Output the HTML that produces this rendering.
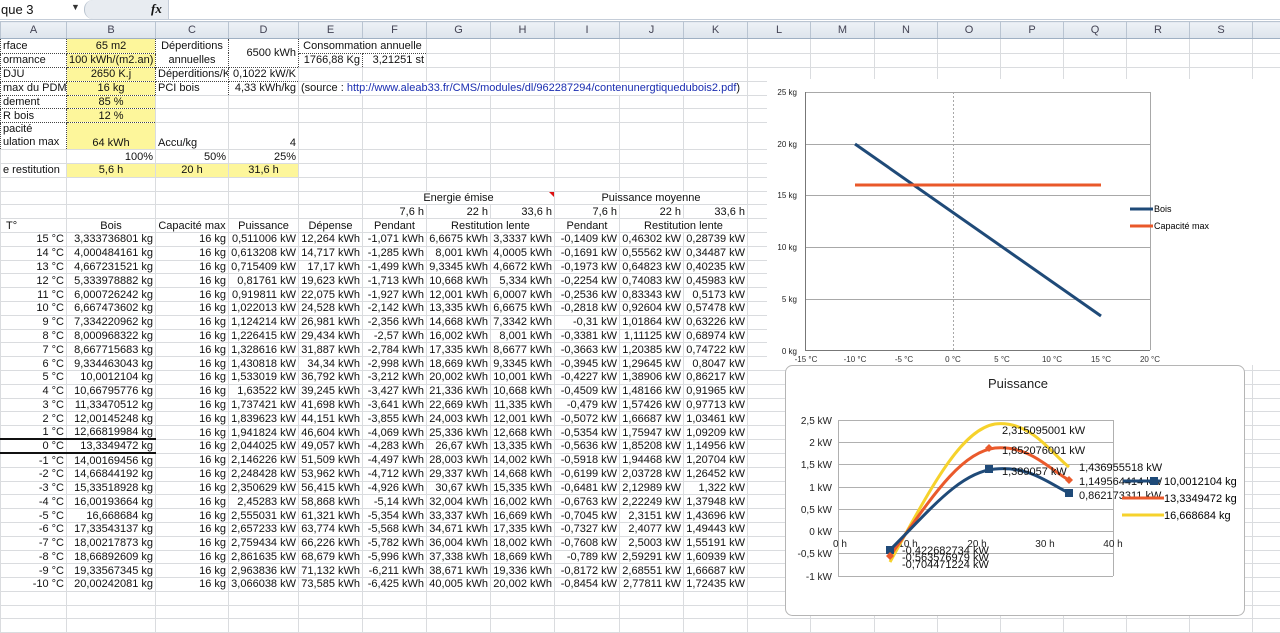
<!DOCTYPE html>
<html><head><meta charset="utf-8">
<style>
*{margin:0;padding:0;box-sizing:border-box}
body{width:1280px;height:625px;overflow:hidden;background:#fff;font-family:"Liberation Sans",Arial,sans-serif;font-size:11px;color:#111;position:relative}
#fb{position:absolute;left:0;top:0;width:1280px;height:20px;background:#fff;border-bottom:1px solid #c5cdd8}
#fb .nb{position:absolute;left:0;top:0;width:84px;height:19px;font-size:13px;line-height:19px;padding-left:1px}
#fb .ar{position:absolute;left:71px;top:2px;font-size:9px;color:#333}
#fb .gr{position:absolute;left:84px;top:0;width:84px;height:19px;background:#e8ecf1;border-radius:9px 0 0 9px;border-left:1px solid #b8c2ce}
#fb .fx{position:absolute;left:151px;top:1px;font-family:"Liberation Serif",serif;font-style:italic;font-weight:bold;font-size:13px}
#fb .in{position:absolute;left:168px;top:0;right:0;height:19px;border-left:1px solid #c5cdd8}
table{position:absolute;left:0;top:21px;border-collapse:collapse;table-layout:fixed;width:1280px}
td{border:1px solid #dadcdf;white-space:nowrap;overflow:hidden;text-align:right;padding:0 2px;height:13.8px;line-height:12px;font-size:11px}
tr.h td{background:linear-gradient(#edf1f6,#dde4ec);text-align:center;color:#445;height:17px;border-color:#b9c4d1;border-bottom:1px solid #9fb0c3}
.c{text-align:center}.l{text-align:left}
.y{background:#fdf69b}
.d{border:1px dotted #444}
.lnk{color:#1a2db0}
tr.z td.k{border-top:2px solid #111;border-bottom:2px solid #111}
</style></head><body>
<div id="fb"><div class="nb">que 3</div><div class="ar">▼</div><div class="gr"></div><div class="fx">fx</div><div class="in"></div></div>
<table>
<colgroup><col style="width:66px"><col style="width:89px"><col style="width:73px"><col style="width:70px"><col style="width:64px"><col style="width:64px"><col style="width:64px"><col style="width:64px"><col style="width:65px"><col style="width:64px"><col style="width:64px"><col style="width:63px"><col style="width:64px"><col style="width:63px"><col style="width:63px"><col style="width:63px"><col style="width:63px"><col style="width:63px"><col style="width:63px"><col style="width:28px"></colgroup>
<tr class="h"><td>A</td><td>B</td><td>C</td><td>D</td><td>E</td><td>F</td><td>G</td><td>H</td><td>I</td><td>J</td><td>K</td><td>L</td><td>M</td><td>N</td><td>O</td><td>P</td><td>Q</td><td>R</td><td>S</td><td></td></tr>
<tr><td class="l d">rface</td><td class="c y d">65 m2</td><td class="c d" rowspan="2" style="white-space:normal;line-height:14px">Déperditions annuelles</td><td class="d" rowspan="2">6500 kWh</td><td class="c d" colspan="2">Consommation annuelle</td><td></td><td></td><td></td><td></td><td></td><td></td><td></td><td></td><td></td><td></td><td></td><td></td><td></td><td></td></tr>
<tr><td class="l d">ormance</td><td class="c y d">100 kWh/(m2.an)</td><td class="d">1766,88 Kg</td><td class="d">3,21251 st</td><td></td><td></td><td></td><td></td><td></td><td></td><td></td><td></td><td></td><td></td><td></td><td></td><td></td><td></td></tr>
<tr><td class="l d">DJU</td><td class="c y d">2650 K.j</td><td class="l d">Déperditions/K</td><td class="d">0,1022 kW/K</td><td></td><td></td><td></td><td></td><td></td><td></td><td></td><td></td><td></td><td></td><td></td><td></td><td></td><td></td><td></td><td></td></tr>
<tr><td class="l d">max du PDM/j</td><td class="c y d">16 kg</td><td class="l d">PCI bois</td><td class="d">4,33 kWh/kg</td><td class="l" colspan="7" style="overflow:visible">(source : <span class="lnk">http://www.aleab33.fr/CMS/modules/dl/962287294/contenunergtiquedubois2.pdf</span>)</td><td></td><td></td><td></td><td></td><td></td><td></td><td></td><td></td><td></td></tr>
<tr><td class="l d">dement</td><td class="c y d">85 %</td><td></td><td></td><td></td><td></td><td></td><td></td><td></td><td></td><td></td><td></td><td></td><td></td><td></td><td></td><td></td><td></td><td></td><td></td></tr>
<tr><td class="l d">R bois</td><td class="c y d">12 %</td><td></td><td></td><td></td><td></td><td></td><td></td><td></td><td></td><td></td><td></td><td></td><td></td><td></td><td></td><td></td><td></td><td></td><td></td></tr>
<tr style="height:27px"><td class="l d" style="white-space:normal;line-height:13px;vertical-align:bottom">pacité<br>ulation max</td><td class="c y d" style="vertical-align:bottom">64 kWh</td><td class="l" style="vertical-align:bottom">Accu/kg</td><td style="vertical-align:bottom">4</td><td></td><td></td><td></td><td></td><td></td><td></td><td></td><td></td><td></td><td></td><td></td><td></td><td></td><td></td><td></td><td></td></tr>
<tr><td></td><td>100%</td><td>50%</td><td>25%</td><td></td><td></td><td></td><td></td><td></td><td></td><td></td><td></td><td></td><td></td><td></td><td></td><td></td><td></td><td></td><td></td></tr>
<tr><td class="l">e restitution</td><td class="c y">5,6 h</td><td class="c y">20 h</td><td class="c y">31,6 h</td><td></td><td></td><td></td><td></td><td></td><td></td><td></td><td></td><td></td><td></td><td></td><td></td><td></td><td></td><td></td><td></td></tr>
<tr><td></td><td></td><td></td><td></td><td></td><td></td><td></td><td></td><td></td><td></td><td></td><td></td><td></td><td></td><td></td><td></td><td></td><td></td><td></td><td></td></tr>
<tr><td></td><td></td><td></td><td></td><td></td><td class="c" colspan="3" style="position:relative">Energie émise<span style="position:absolute;right:0;top:0;width:0;height:0;border-left:5px solid transparent;border-top:5px solid #d11"></span></td><td class="c" colspan="3">Puissance moyenne</td><td></td><td></td><td></td><td></td><td></td><td></td><td></td><td></td><td></td></tr>
<tr><td></td><td></td><td></td><td></td><td></td><td>7,6 h</td><td>22 h</td><td>33,6 h</td><td>7,6 h</td><td>22 h</td><td>33,6 h</td><td></td><td></td><td></td><td></td><td></td><td></td><td></td><td></td><td></td></tr>
<tr><td class="l">&nbsp;T°</td><td class="c">Bois</td><td class="c">Capacité max</td><td class="c">Puissance</td><td class="c">Dépense</td><td class="c">Pendant</td><td class="c" colspan="2">Restitution lente</td><td class="c">Pendant</td><td class="c" colspan="2">Restitution lente</td><td></td><td></td><td></td><td></td><td></td><td></td><td></td><td></td><td></td></tr>
<tr><td>15 °C</td><td>3,333736801 kg</td><td>16 kg</td><td>0,511006 kW</td><td>12,264 kWh</td><td>-1,071 kWh</td><td>6,6675 kWh</td><td>3,3337 kWh</td><td>-0,1409 kW</td><td>0,46302 kW</td><td>0,28739 kW</td><td></td><td></td><td></td><td></td><td></td><td></td><td></td><td></td><td></td></tr>
<tr><td>14 °C</td><td>4,000484161 kg</td><td>16 kg</td><td>0,613208 kW</td><td>14,717 kWh</td><td>-1,285 kWh</td><td>8,001 kWh</td><td>4,0005 kWh</td><td>-0,1691 kW</td><td>0,55562 kW</td><td>0,34487 kW</td><td></td><td></td><td></td><td></td><td></td><td></td><td></td><td></td><td></td></tr>
<tr><td>13 °C</td><td>4,667231521 kg</td><td>16 kg</td><td>0,715409 kW</td><td>17,17 kWh</td><td>-1,499 kWh</td><td>9,3345 kWh</td><td>4,6672 kWh</td><td>-0,1973 kW</td><td>0,64823 kW</td><td>0,40235 kW</td><td></td><td></td><td></td><td></td><td></td><td></td><td></td><td></td><td></td></tr>
<tr><td>12 °C</td><td>5,333978882 kg</td><td>16 kg</td><td>0,81761 kW</td><td>19,623 kWh</td><td>-1,713 kWh</td><td>10,668 kWh</td><td>5,334 kWh</td><td>-0,2254 kW</td><td>0,74083 kW</td><td>0,45983 kW</td><td></td><td></td><td></td><td></td><td></td><td></td><td></td><td></td><td></td></tr>
<tr><td>11 °C</td><td>6,000726242 kg</td><td>16 kg</td><td>0,919811 kW</td><td>22,075 kWh</td><td>-1,927 kWh</td><td>12,001 kWh</td><td>6,0007 kWh</td><td>-0,2536 kW</td><td>0,83343 kW</td><td>0,5173 kW</td><td></td><td></td><td></td><td></td><td></td><td></td><td></td><td></td><td></td></tr>
<tr><td>10 °C</td><td>6,667473602 kg</td><td>16 kg</td><td>1,022013 kW</td><td>24,528 kWh</td><td>-2,142 kWh</td><td>13,335 kWh</td><td>6,6675 kWh</td><td>-0,2818 kW</td><td>0,92604 kW</td><td>0,57478 kW</td><td></td><td></td><td></td><td></td><td></td><td></td><td></td><td></td><td></td></tr>
<tr><td>9 °C</td><td>7,334220962 kg</td><td>16 kg</td><td>1,124214 kW</td><td>26,981 kWh</td><td>-2,356 kWh</td><td>14,668 kWh</td><td>7,3342 kWh</td><td>-0,31 kW</td><td>1,01864 kW</td><td>0,63226 kW</td><td></td><td></td><td></td><td></td><td></td><td></td><td></td><td></td><td></td></tr>
<tr><td>8 °C</td><td>8,000968322 kg</td><td>16 kg</td><td>1,226415 kW</td><td>29,434 kWh</td><td>-2,57 kWh</td><td>16,002 kWh</td><td>8,001 kWh</td><td>-0,3381 kW</td><td>1,11125 kW</td><td>0,68974 kW</td><td></td><td></td><td></td><td></td><td></td><td></td><td></td><td></td><td></td></tr>
<tr><td>7 °C</td><td>8,667715683 kg</td><td>16 kg</td><td>1,328616 kW</td><td>31,887 kWh</td><td>-2,784 kWh</td><td>17,335 kWh</td><td>8,6677 kWh</td><td>-0,3663 kW</td><td>1,20385 kW</td><td>0,74722 kW</td><td></td><td></td><td></td><td></td><td></td><td></td><td></td><td></td><td></td></tr>
<tr><td>6 °C</td><td>9,334463043 kg</td><td>16 kg</td><td>1,430818 kW</td><td>34,34 kWh</td><td>-2,998 kWh</td><td>18,669 kWh</td><td>9,3345 kWh</td><td>-0,3945 kW</td><td>1,29645 kW</td><td>0,8047 kW</td><td></td><td></td><td></td><td></td><td></td><td></td><td></td><td></td><td></td></tr>
<tr><td>5 °C</td><td>10,0012104 kg</td><td>16 kg</td><td>1,533019 kW</td><td>36,792 kWh</td><td>-3,212 kWh</td><td>20,002 kWh</td><td>10,001 kWh</td><td>-0,4227 kW</td><td>1,38906 kW</td><td>0,86217 kW</td><td></td><td></td><td></td><td></td><td></td><td></td><td></td><td></td><td></td></tr>
<tr><td>4 °C</td><td>10,66795776 kg</td><td>16 kg</td><td>1,63522 kW</td><td>39,245 kWh</td><td>-3,427 kWh</td><td>21,336 kWh</td><td>10,668 kWh</td><td>-0,4509 kW</td><td>1,48166 kW</td><td>0,91965 kW</td><td></td><td></td><td></td><td></td><td></td><td></td><td></td><td></td><td></td></tr>
<tr><td>3 °C</td><td>11,33470512 kg</td><td>16 kg</td><td>1,737421 kW</td><td>41,698 kWh</td><td>-3,641 kWh</td><td>22,669 kWh</td><td>11,335 kWh</td><td>-0,479 kW</td><td>1,57426 kW</td><td>0,97713 kW</td><td></td><td></td><td></td><td></td><td></td><td></td><td></td><td></td><td></td></tr>
<tr><td>2 °C</td><td>12,00145248 kg</td><td>16 kg</td><td>1,839623 kW</td><td>44,151 kWh</td><td>-3,855 kWh</td><td>24,003 kWh</td><td>12,001 kWh</td><td>-0,5072 kW</td><td>1,66687 kW</td><td>1,03461 kW</td><td></td><td></td><td></td><td></td><td></td><td></td><td></td><td></td><td></td></tr>
<tr><td>1 °C</td><td>12,66819984 kg</td><td>16 kg</td><td>1,941824 kW</td><td>46,604 kWh</td><td>-4,069 kWh</td><td>25,336 kWh</td><td>12,668 kWh</td><td>-0,5354 kW</td><td>1,75947 kW</td><td>1,09209 kW</td><td></td><td></td><td></td><td></td><td></td><td></td><td></td><td></td><td></td></tr>
<tr class="z"><td class="k">0 °C</td><td class="k">13,3349472 kg</td><td>16 kg</td><td>2,044025 kW</td><td>49,057 kWh</td><td>-4,283 kWh</td><td>26,67 kWh</td><td>13,335 kWh</td><td>-0,5636 kW</td><td>1,85208 kW</td><td>1,14956 kW</td><td></td><td></td><td></td><td></td><td></td><td></td><td></td><td></td><td></td></tr>
<tr><td>-1 °C</td><td>14,00169456 kg</td><td>16 kg</td><td>2,146226 kW</td><td>51,509 kWh</td><td>-4,497 kWh</td><td>28,003 kWh</td><td>14,002 kWh</td><td>-0,5918 kW</td><td>1,94468 kW</td><td>1,20704 kW</td><td></td><td></td><td></td><td></td><td></td><td></td><td></td><td></td><td></td></tr>
<tr><td>-2 °C</td><td>14,66844192 kg</td><td>16 kg</td><td>2,248428 kW</td><td>53,962 kWh</td><td>-4,712 kWh</td><td>29,337 kWh</td><td>14,668 kWh</td><td>-0,6199 kW</td><td>2,03728 kW</td><td>1,26452 kW</td><td></td><td></td><td></td><td></td><td></td><td></td><td></td><td></td><td></td></tr>
<tr><td>-3 °C</td><td>15,33518928 kg</td><td>16 kg</td><td>2,350629 kW</td><td>56,415 kWh</td><td>-4,926 kWh</td><td>30,67 kWh</td><td>15,335 kWh</td><td>-0,6481 kW</td><td>2,12989 kW</td><td>1,322 kW</td><td></td><td></td><td></td><td></td><td></td><td></td><td></td><td></td><td></td></tr>
<tr><td>-4 °C</td><td>16,00193664 kg</td><td>16 kg</td><td>2,45283 kW</td><td>58,868 kWh</td><td>-5,14 kWh</td><td>32,004 kWh</td><td>16,002 kWh</td><td>-0,6763 kW</td><td>2,22249 kW</td><td>1,37948 kW</td><td></td><td></td><td></td><td></td><td></td><td></td><td></td><td></td><td></td></tr>
<tr><td>-5 °C</td><td>16,668684 kg</td><td>16 kg</td><td>2,555031 kW</td><td>61,321 kWh</td><td>-5,354 kWh</td><td>33,337 kWh</td><td>16,669 kWh</td><td>-0,7045 kW</td><td>2,3151 kW</td><td>1,43696 kW</td><td></td><td></td><td></td><td></td><td></td><td></td><td></td><td></td><td></td></tr>
<tr><td>-6 °C</td><td>17,33543137 kg</td><td>16 kg</td><td>2,657233 kW</td><td>63,774 kWh</td><td>-5,568 kWh</td><td>34,671 kWh</td><td>17,335 kWh</td><td>-0,7327 kW</td><td>2,4077 kW</td><td>1,49443 kW</td><td></td><td></td><td></td><td></td><td></td><td></td><td></td><td></td><td></td></tr>
<tr><td>-7 °C</td><td>18,00217873 kg</td><td>16 kg</td><td>2,759434 kW</td><td>66,226 kWh</td><td>-5,782 kWh</td><td>36,004 kWh</td><td>18,002 kWh</td><td>-0,7608 kW</td><td>2,5003 kW</td><td>1,55191 kW</td><td></td><td></td><td></td><td></td><td></td><td></td><td></td><td></td><td></td></tr>
<tr><td>-8 °C</td><td>18,66892609 kg</td><td>16 kg</td><td>2,861635 kW</td><td>68,679 kWh</td><td>-5,996 kWh</td><td>37,338 kWh</td><td>18,669 kWh</td><td>-0,789 kW</td><td>2,59291 kW</td><td>1,60939 kW</td><td></td><td></td><td></td><td></td><td></td><td></td><td></td><td></td><td></td></tr>
<tr><td>-9 °C</td><td>19,33567345 kg</td><td>16 kg</td><td>2,963836 kW</td><td>71,132 kWh</td><td>-6,211 kWh</td><td>38,671 kWh</td><td>19,336 kWh</td><td>-0,8172 kW</td><td>2,68551 kW</td><td>1,66687 kW</td><td></td><td></td><td></td><td></td><td></td><td></td><td></td><td></td><td></td></tr>
<tr><td>-10 °C</td><td>20,00242081 kg</td><td>16 kg</td><td>3,066038 kW</td><td>73,585 kWh</td><td>-6,425 kWh</td><td>40,005 kWh</td><td>20,002 kWh</td><td>-0,8454 kW</td><td>2,77811 kW</td><td>1,72435 kW</td><td></td><td></td><td></td><td></td><td></td><td></td><td></td><td></td><td></td></tr>
<tr><td></td><td></td><td></td><td></td><td></td><td></td><td></td><td></td><td></td><td></td><td></td><td></td><td></td><td></td><td></td><td></td><td></td><td></td><td></td><td></td></tr>
<tr><td></td><td></td><td></td><td></td><td></td><td></td><td></td><td></td><td></td><td></td><td></td><td></td><td></td><td></td><td></td><td></td><td></td><td></td><td></td><td></td></tr>
<tr><td></td><td></td><td></td><td></td><td></td><td></td><td></td><td></td><td></td><td></td><td></td><td></td><td></td><td></td><td></td><td></td><td></td><td></td><td></td><td></td></tr>
</table>

<svg style="position:absolute;left:0;top:0" width="1280" height="625" font-family="Liberation Sans, Arial, sans-serif">
<rect x="767" y="79" width="513" height="286" fill="#fff"/>
<g stroke="#a8a8a8" stroke-width="1">
<line x1="805" y1="92.5" x2="1150" y2="92.5"/><line x1="805" y1="144.5" x2="1150" y2="144.5"/><line x1="805" y1="195.5" x2="1150" y2="195.5"/><line x1="805" y1="247.5" x2="1150" y2="247.5"/><line x1="805" y1="299.5" x2="1150" y2="299.5"/>
<line x1="805" y1="350.5" x2="1150" y2="350.5" stroke="#777"/><line x1="805.5" y1="92" x2="805.5" y2="350" stroke="#777"/><line x1="1150.5" y1="92" x2="1150.5" y2="350"/>
<line x1="953.5" y1="92" x2="953.5" y2="350" stroke-dasharray="2,2"/>
</g>
<g font-size="8" fill="#222" text-anchor="end"><text x="797" y="95">25 kg</text><text x="797" y="147">20 kg</text><text x="797" y="198">15 kg</text><text x="797" y="250">10 kg</text><text x="797" y="302">5 kg</text><text x="797" y="354">0 kg</text></g>
<g font-size="8" fill="#333" text-anchor="middle"><text x="806" y="362">-15 °C</text><text x="855" y="362">-10 °C</text><text x="904" y="362">-5 °C</text><text x="953" y="362">0 °C</text><text x="1002" y="362">5 °C</text><text x="1052" y="362">10 °C</text><text x="1101" y="362">15 °C</text><text x="1150" y="362">20 °C</text></g>
<line x1="855" y1="144" x2="1101" y2="316" stroke="#1f4a78" stroke-width="3"/>
<line x1="855" y1="185" x2="1101" y2="185" stroke="#e9582a" stroke-width="3"/>
<line x1="1130" y1="209" x2="1153" y2="209" stroke="#1f4a78" stroke-width="3"/><text x="1154" y="212" font-size="9">Bois</text>
<line x1="1130" y1="226" x2="1153" y2="226" stroke="#e9582a" stroke-width="3"/><text x="1154" y="229" font-size="9">Capacité max</text>
<rect x="785.5" y="365.5" width="459" height="250" rx="7" fill="#fff" stroke="#b5b5b5"/>
<text x="1018" y="388" font-size="13" text-anchor="middle" fill="#222">Puissance</text>
<g stroke="#b0b0b0"><line x1="838" y1="420.5" x2="1113" y2="420.5"/><line x1="838" y1="442.5" x2="1113" y2="442.5"/><line x1="838" y1="464.5" x2="1113" y2="464.5"/><line x1="838" y1="487.5" x2="1113" y2="487.5"/><line x1="838" y1="509.5" x2="1113" y2="509.5"/><line x1="838" y1="531.5" x2="1113" y2="531.5"/><line x1="838" y1="553.5" x2="1113" y2="553.5"/><line x1="838" y1="576.5" x2="1113" y2="576.5"/><line x1="838.5" y1="420" x2="838.5" y2="576"/><line x1="1113.5" y1="420" x2="1113.5" y2="576"/></g>
<g font-size="10" fill="#222" text-anchor="end"><text x="832" y="424">2,5 kW</text><text x="832" y="446">2 kW</text><text x="832" y="468">1,5 kW</text><text x="832" y="491">1 kW</text><text x="832" y="513">0,5 kW</text><text x="832" y="535">0 kW</text><text x="832" y="557">-0,5 kW</text><text x="832" y="580">-1 kW</text></g>
<g font-size="10" fill="#222" text-anchor="middle"><text x="840" y="547">0 h</text><text x="908" y="547">10 h</text><text x="977" y="547">20 h</text><text x="1045" y="547">30 h</text><text x="1113" y="547">40 h</text></g>
<path d="M890,562 C930,490 960,430 995,424 C1030,420 1050,452 1069,467" fill="none" stroke="#f6d22c" stroke-width="3"/>
<path d="M890,556 C930,500 960,452 995,448 C1030,445 1050,470 1069,480" fill="none" stroke="#ea5a2c" stroke-width="3"/>
<path d="M890,550 C930,510 960,472 995,469 C1030,466 1048,483 1069,493" fill="none" stroke="#1f4a78" stroke-width="3"/>
<rect x="886" y="546" width="8" height="8" fill="#1f4a78"/><rect x="985" y="465" width="8" height="8" fill="#1f4a78"/><rect x="1065" y="489" width="8" height="8" fill="#1f4a78"/>
<path d="M890,552l4,4-4,4-4-4z M989,444l4,4-4,4-4-4z M1069,476l4,4-4,4-4-4z" fill="#ea5a2c"/>
<g font-size="11" fill="#111"><text x="1002" y="434">2,315095001 kW</text><text x="1002" y="454">1,852076001 kW</text><text x="1002" y="475">1,389057 kW</text><text x="1079" y="471">1,436955518 kW</text><text x="1079" y="485">1,149564414 kW</text><text x="1079" y="499">0,862173311 kW</text><text x="902" y="554">-0,422682734 kW</text><text x="902" y="561">-0,563576979 kW</text><text x="902" y="568">-0,704471224 kW</text></g>
<line x1="1123" y1="481" x2="1160" y2="481" stroke="#1f4a78" stroke-width="3"/><rect x="1150" y="477" width="8" height="8" fill="#1f4a78"/><text x="1164" y="485" font-size="11">10,0012104 kg</text>
<line x1="1122" y1="498" x2="1164" y2="498" stroke="#ea5a2c" stroke-width="3"/><text x="1164" y="502" font-size="11">13,3349472 kg</text>
<line x1="1122" y1="515" x2="1164" y2="515" stroke="#f6d22c" stroke-width="3"/><text x="1164" y="519" font-size="11">16,668684 kg</text>
</svg>
</body></html>
